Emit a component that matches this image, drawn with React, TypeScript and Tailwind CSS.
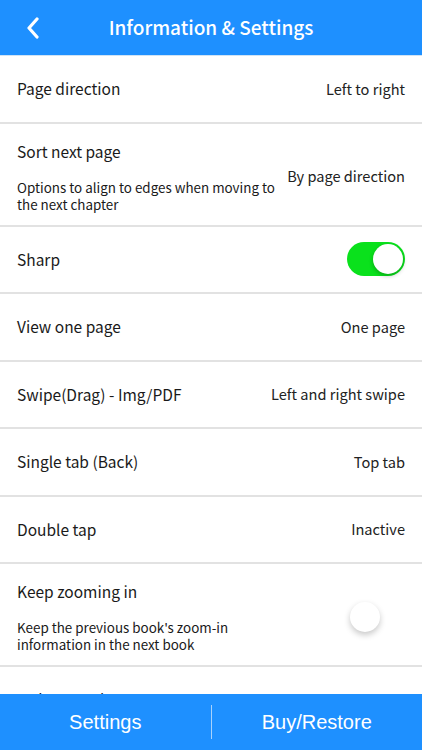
import React from "react";

type Row = {
  label: string;
  sub?: string;
  value?: string;
  toggle?: boolean;
};

const ROWS: Row[] = [
  { label: "Page direction", value: "Left to right" },
  { label: "Sort next page", sub: "Options to align to edges when moving to the next chapter", value: "By page direction" },
  { label: "Sharp", toggle: true },
  { label: "View one page", value: "One page" },
  { label: "Swipe(Drag) - Img/PDF", value: "Left and right swipe" },
  { label: "Single tab (Back)", value: "Top tab" },
  { label: "Double tap", value: "Inactive" },
  { label: "Keep zooming in", sub: "Keep the previous book's zoom-in information in the next book", toggle: false },
  { label: "Make a mark", value: "" },
];

function Toggle({ on }: { on: boolean }) {
  return (
    <div
      className={`w-[58px] h-[34px] rounded-full flex items-center px-[2px] ${
        on ? "bg-[#0ae11c] justify-end" : "bg-white justify-start"
      }`}
    >
      <div
        className={`size-[30px] rounded-full bg-white ${
          on ? "shadow-[0_2px_4px_rgba(0,0,0,0.25)]" : "shadow-[0_3px_6px_rgba(0,0,0,0.22)] ml-[1px]"
        }`}
      />
    </div>
  );
}

function SettingRow({ row }: { row: Row }) {
  const right =
    row.toggle !== undefined ? (
      <Toggle on={row.toggle} />
    ) : (
      <span className="text-[14.6px] text-[#222] whitespace-nowrap">{row.value}</span>
    );

  if (row.sub) {
    return (
      <div className="flex items-center justify-between pl-[17px] pr-[17px] pt-[16px] pb-[12px] border-b-2 border-[#e2e2e2]">
        <div className="w-[265px] shrink-0">
          <div className="text-[15.5px] leading-[22px] text-[#1a1a1a]">{row.label}</div>
          <div className="mt-[17px] text-[13.4px] leading-[17px] text-[#1a1a1a]">{row.sub}</div>
        </div>
        {right}
      </div>
    );
  }

  return (
    <div className="h-[67.5px] shrink-0 flex items-center justify-between px-[17px] border-b-2 border-[#e2e2e2]">
      <span className="text-[15.5px] text-[#1a1a1a]">{row.label}</span>
      {right}
    </div>
  );
}

export default function App() {
  return (
    <div
      className="w-[422px] h-[750px] flex flex-col bg-white overflow-hidden"
      style={{ fontFamily: '"Noto Sans CJK KR", "Noto Sans", sans-serif' }}
    >
      {/* Header */}
      <div className="h-[56px] shrink-0 bg-[#1e90ff] flex items-center relative border-b border-[#cfe3f5]">
        <div className="w-[60px] flex justify-center pl-[6px]">
          <svg width="16" height="22" viewBox="0 0 16 22" fill="none">
            <path d="M12 2 L4 11 L12 20" stroke="white" strokeWidth="3.2" strokeLinecap="round" strokeLinejoin="round" />
          </svg>
        </div>
        <div className="flex-1 text-center pr-[60px] text-white text-[19px] font-medium">
          Information &amp; Settings
        </div>
      </div>

      {/* List */}
      <div className="flex-1 min-h-0 overflow-hidden flex flex-col">
        {ROWS.map((r) => (
          <SettingRow key={r.label} row={r} />
        ))}
      </div>

      {/* Footer */}
      <div
        className="h-[56px] shrink-0 bg-[#1e90ff] flex items-center text-white text-[20px]"
        style={{ fontFamily: '"Liberation Sans", Arial, sans-serif' }}
      >
        <div className="flex-1 text-center">Settings</div>
        <div className="w-px h-[34px] bg-[#a9d2fb]" />
        <div className="flex-1 text-center">Buy/Restore</div>
      </div>
    </div>
  );
}
